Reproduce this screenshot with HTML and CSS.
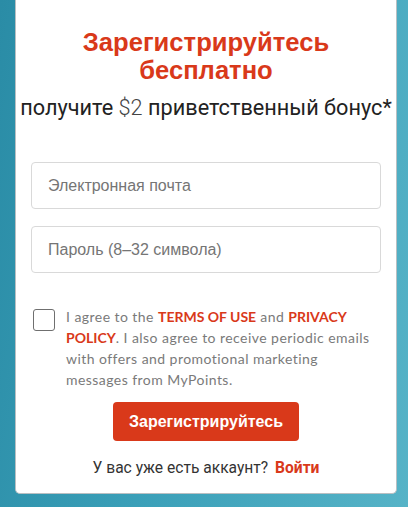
FILE: index.html
```html
<!DOCTYPE html>
<html lang="ru">
<head>
<meta charset="utf-8">
<link rel="stylesheet" href="styles.css">
</head>
<body>
<div class="page">
  <div class="card">
    <h1 class="title">Зарегистрируйтесь<br>бесплатно</h1>
    <p class="subtitle">получите <span class="amount">$2</span> приветственный бонус*</p>
    <form class="form">
      <input class="field" type="email" placeholder="Электронная почта">
      <input class="field" type="password" placeholder="Пароль (8–32 символа)">
      <label class="agree">
        <span class="box"></span>
        <span class="agree-text">I agree to the <a class="link" href="#">TERMS OF USE</a> and <a class="link" href="#">PRIVACY POLICY</a>. I also agree to receive periodic emails with offers and promotional marketing messages from MyPoints.</span>
      </label>
      <div class="actions"><button class="submit" type="button">Зарегистрируйтесь</button></div>
    </form>
    <p class="login">У вас уже есть аккаунт? <a class="login-link" href="#">Войти</a></p>
  </div>
</div>
</body>
</html>
```
FILE: styles.css
```css
* { box-sizing: border-box; }
html, body { margin: 0; padding: 0; }
body {
  width: 408px;
  height: 507px;
  overflow: hidden;
  background: linear-gradient(100deg, #2a8ca6 0%, #3a9fb8 45%, #56b3c7 100%);
  font-family: Roboto, "Liberation Sans", Arial, sans-serif;
}
.page {
  padding: 0 11px 0 15px;
  height: 507px;
}
.card {
  background: #fff;
  border: 1px solid #b9bfc2;
  border-top: none;
  border-radius: 0 0 5px 5px;
  height: 494px;
  display: flex;
  flex-direction: column;
  align-items: center;
  padding-top: 28px;
}
.title {
  margin: 0;
  color: #d9391a;
  font-family: "Liberation Sans", Arial, sans-serif;
  font-weight: 700;
  font-size: 25.6px;
  line-height: 28px;
  text-align: center;
}
.subtitle {
  margin: 11px 0 0;
  color: #222;
  font-size: 21.7px;
  line-height: 26px;
  text-align: center;
  white-space: nowrap;
}
.amount { font-weight: 300; color: #444; }
.form {
  width: 350px;
  margin-top: 41px;
  display: flex;
  flex-direction: column;
}
.field {
  height: 47px;
  width: 100%;
  border: 1px solid #d9d9d9;
  border-radius: 4px;
  padding: 0 16px;
  font-family: "Liberation Sans", Arial, sans-serif;
  font-size: 16px;
  color: #333;
  outline: none;
}
.field::placeholder { color: #757575; }
.field + .field { margin-top: 17px; }
.agree {
  display: flex;
  align-items: flex-start;
  gap: 11px;
  margin-top: 33px;
  padding-left: 2px;
  padding-right: 6px;
}
.box {
  flex: none;
  width: 22px;
  height: 22px;
  border: 1.5px solid #6f6f6f;
  border-radius: 3px;
  margin-top: 3px;
}
.agree-text {
  font-family: Lato, "Open Sans", sans-serif;
  font-size: 14px;
  letter-spacing: 0.45px;
  line-height: 21px;
  color: #7a7a7a;
}
.link {
  color: #d9391a;
  font-weight: 700;
  letter-spacing: 0;
  text-decoration: none;
}
.actions {
  display: flex;
  justify-content: center;
  margin-top: 12px;
}
.submit {
  width: 186px;
  height: 39px;
  background: #d9391a;
  color: #fff;
  border: none;
  border-radius: 4px;
  font-family: "Liberation Sans", Arial, sans-serif;
  font-weight: 700;
  font-size: 16px;
}
.login {
  margin: 18px 0 0;
  font-size: 15.6px;
  line-height: 19px;
  color: #333;
  text-align: center;
}
.login-link {
  color: #d9391a;
  font-weight: 700;
  text-decoration: none;
  margin-left: 3px;
}
```
